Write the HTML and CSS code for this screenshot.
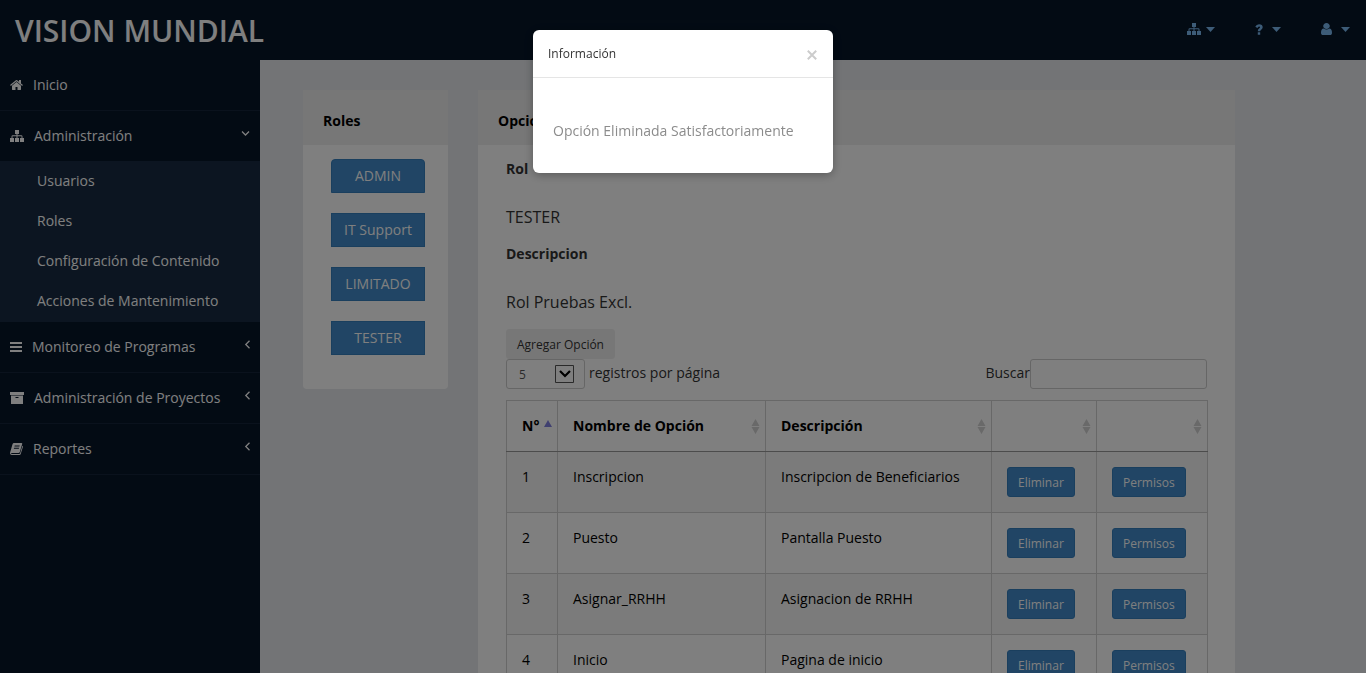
FILE: index.html
```html
<!DOCTYPE html>
<html lang="es">
<head>
<meta charset="utf-8">
<meta name="viewport" content="width=device-width, initial-scale=1">
<title>Vision Mundial</title>
<link rel="stylesheet" href="styles.css">
</head>
<body>
<svg class="sprite" aria-hidden="true">
  <symbol id="sitemap" viewBox="0 0 14 12"><path d="M5 0h4v4H7.5v1.3h3.7q1.3 0 1.3 1.2V8H14v4h-4V8h1.5V6.3h-4V8H9v4H5V8h1.500V6.300h-4V8H4v4H0V8h1.500V6.500q0-1.200 1.300-1.200h3.700V4H5z"/></symbol>
  <symbol id="caret" viewBox="0 0 9 5"><path d="M0 0h9L4.500 5z"/></symbol>
  <symbol id="down" viewBox="0 0 9 9"><path d="M1 2.500l3.500 3.500L8 2.500" fill="none" stroke="currentColor" stroke-width="1.300"/></symbol>
  <symbol id="left" viewBox="0 0 9 9"><path d="M8.500 .800L4.800 4.500 8.500 8.200" fill="none" stroke="currentColor" stroke-width="1.300"/></symbol>
  <symbol id="sort" viewBox="0 0 9 15"><path d="M.500 7L4.500 0l4 7zM.500 8h8l-4 7z"/></symbol>
</svg>

<header class="topbar">
  <h1 class="brand">VISION MUNDIAL</h1>
  <nav class="tools" aria-label="Herramientas">
    <a class="tool tool-tight" href="#" aria-label="Sitio"><svg class="icon14"><use href="#sitemap"/></svg><svg class="caret"><use href="#caret"/></svg></a>
    <a class="tool" href="#" aria-label="Ayuda"><svg class="icon-help" viewBox="0 0 8 11"><path d="M.3 2.800Q1.300.300 4 .300q3.700 0 3.700 3 0 1.500-1.500 2.400-1 .6-1 1.600H2.800q0-2 1.300-2.800 1-.6 1-1.200 0-.9-1.100-.9-.8 0-1.600 1.500zM2.800 8.300h2.400v2.400H2.800z"/></svg><svg class="caret"><use href="#caret"/></svg></a>
    <a class="tool" href="#" aria-label="Usuario"><svg class="icon-user" viewBox="0 128 1280 1536" preserveAspectRatio="none"><path d="M1280 1399q0 109-62.500 187t-150.500 78h-854q-88 0-150.500-78T0 1399q0-85 8.500-160.500t31.500-152 58.500-131 94-89T327 832q131 128 313 128t313-128q76 0 134.500 34.500t94 89 58.500 131 31.500 152T1280 1399zM1024 512q0 159-112.500 271.500T640 896 368.500 783.500 256 512t112.500-271.500T640 128t271.500 112.500T1024 512z"/></svg><svg class="caret"><use href="#caret"/></svg></a>
  </nav>
</header>

<div class="layout">
  <nav class="sidebar" aria-label="Principal">
    <a class="item" href="#"><svg class="icon13" viewBox="0 253 1664 1283"><path d="M1408 992v480q0 26-19 45t-45 19H960v-384H704v384H320q-26 0-45-19t-19-45V992q0-1 .5-3t.5-3l575-474 575 474q1 2 1 6zm223-69l-62 74q-8 9-21 11h-3q-13 0-21-7L832 424 140 1001q-12 8-24 7-13-2-21-11l-62-74q-8-10-7-23.500T37 878l719-599q32-26 76-26t76 26l244 204V288q0-14 9-23t23-9h192q14 0 23 9t9 23v408l219 182q10 8 11 21.500t-7 23.500z"/></svg>Inicio</a>
    <a class="item" href="#"><svg class="icon14"><use href="#sitemap"/></svg>Administración<svg class="chevron"><use href="#down"/></svg></a>
    <div class="submenu">
      <a class="subitem" href="#">Usuarios</a>
      <a class="subitem" href="#">Roles</a>
      <a class="subitem" href="#">Configuración de Contenido</a>
      <a class="subitem" href="#">Acciones de Mantenimiento</a>
    </div>
    <a class="item" href="#"><svg class="icon12" viewBox="0 0 12 12"><path d="M0 1h12v2H0zM0 5h12v2H0zM0 9h12v2H0z"/></svg>Monitoreo de Programas<svg class="chevron"><use href="#left"/></svg></a>
    <a class="item" href="#"><svg class="icon14" viewBox="0 0 14 12"><path d="M0 0h14v3H0zM1 3.600h12V12H1zM5.500 5v1h3V5z" fill-rule="evenodd"/></svg>Administración de Proyectos<svg class="chevron"><use href="#left"/></svg></a>
    <a class="item" href="#"><svg class="icon13" viewBox="0 0 13 12"><path d="M4 0h7.500q1 0 .7 1L9.800 9q-.3 1-1.300 1H1.800q-.7 0-.7.500t.7.500h7.400q.6 0 .9-.8l2.300-7.500q.8.300.5 1.300L10.700 11q-.3 1-1.300 1H1.700Q-.3 12 .1 9.600L2.500 1.300Q2.900 0 4 0zM4.700 2.500l-.3 1h5l.3-1zM4.100 4.700l-.3 1h5l.3-1z" fill-rule="evenodd"/></svg>Reportes<svg class="chevron"><use href="#left"/></svg></a>
  </nav>

  <main class="content">
    <section class="panel">
      <h2 class="panel-title">Roles</h2>
      <div class="roles">
        <button class="btn role role-first" type="button">ADMIN</button>
        <button class="btn role" type="button">IT Support</button>
        <button class="btn role" type="button">LIMITADO</button>
        <button class="btn role" type="button">TESTER</button>
      </div>
    </section>

    <section class="panel">
      <h2 class="panel-title">Opciones</h2>
      <div class="details">
        <dl class="facts">
          <dt>Rol</dt><dd>TESTER</dd>
          <dt>Descripcion</dt><dd>Rol Pruebas Excl.</dd>
        </dl>
        <button class="btn btn-small btn-plain" type="button">Agregar Opción</button>
        <div class="filters">
          <div class="length">
            <span class="select-box">
              <select id="length" class="field select"><option>5</option><option>10</option><option>25</option></select>
              <svg class="select-arrow" viewBox="0 0 19 18" aria-hidden="true"><path d="M.5.500h18v17H.500z" fill="#fff" fill-opacity=".15" stroke="#555"/><path d="M5 6l5 5 5-5" fill="none" stroke="#000" stroke-width="2.200"/></svg>
            </span>
            <label for="length">registros por página</label>
          </div>
          <div class="search"><label for="search">Buscar</label><input id="search" class="field search-field" type="text"></div>
        </div>
        <table class="grid">
          <colgroup><col class="c-num"><col class="c-name"><col class="c-desc"><col class="c-del"><col class="c-perm"></colgroup>
          <thead><tr>
            <th scope="col"><span class="head">N°<svg class="sorted" viewBox="0 0 8 7"><path d="M0 7l4-7 4 7z"/></svg></span></th>
            <th scope="col"><span class="head">Nombre de Opción<svg class="sort"><use href="#sort"/></svg></span></th>
            <th scope="col"><span class="head">Descripción<svg class="sort"><use href="#sort"/></svg></span></th>
            <th scope="col"><span class="head"><svg class="sort"><use href="#sort"/></svg></span></th>
            <th scope="col"><span class="head"><svg class="sort"><use href="#sort"/></svg></span></th>
          </tr></thead>
          <tbody>
            <tr><td>1</td><td>Inscripcion</td><td>Inscripcion de Beneficiarios</td><td><button class="btn btn-small" type="button">Eliminar</button></td><td><button class="btn btn-small" type="button">Permisos</button></td></tr>
            <tr><td>2</td><td>Puesto</td><td>Pantalla Puesto</td><td><button class="btn btn-small" type="button">Eliminar</button></td><td><button class="btn btn-small" type="button">Permisos</button></td></tr>
            <tr><td>3</td><td>Asignar_RRHH</td><td>Asignacion de RRHH</td><td><button class="btn btn-small" type="button">Eliminar</button></td><td><button class="btn btn-small" type="button">Permisos</button></td></tr>
            <tr><td>4</td><td>Inicio</td><td>Pagina de inicio</td><td><button class="btn btn-small" type="button">Eliminar</button></td><td><button class="btn btn-small" type="button">Permisos</button></td></tr>
          </tbody>
        </table>
      </div>
    </section>
  </main>
</div>

<div class="backdrop">
  <div class="modal" role="dialog" aria-modal="true" aria-labelledby="modal-title">
    <div class="modal-head">
      <h2 class="modal-title" id="modal-title">Información</h2>
      <button class="close" type="button" aria-label="Cerrar"><svg class="close-icon" viewBox="0 0 10 10"><path d="M.800.800l8.400 8.400M9.200.800L.800 9.200" fill="none" stroke="currentColor" stroke-width="2"/></svg></button>
    </div>
    <p class="modal-body">Opción Eliminada Satisfactoriamente</p>
  </div>
</div>
</body>
</html>
```
FILE: styles.css
```css
* { box-sizing: border-box; }

body {
  margin: 0;
  height: 100vh;
  overflow: hidden;
  display: flex;
  flex-direction: column;
  background: #e6e9ed;
  color: #333;
  font: 14px/20px "Open Sans", "Noto Sans", sans-serif;
}

h1, h2, p, dl, dd { margin: 0; }
a { color: inherit; text-decoration: none; }
svg { display: block; flex: none; fill: currentColor; }
button, input, select { font: inherit; margin: 0; }
.sprite { position: absolute; width: 0; height: 0; }

.icon12 { width: 12px; height: 12px; }
.icon13 { width: 13px; height: 12px; }
.icon14 { width: 14px; height: 12px; }
.icon-help { width: 8px; height: 11px; }
.icon-user { width: 11px; height: 12px; }
.caret { width: 9px; height: 5px; }

/* Top bar */
.topbar {
  flex: none;
  height: 60px;
  padding: 0 16px 0 15px;
  display: flex;
  align-items: center;
  justify-content: space-between;
  background: #061629;
}
.brand { padding-top: 2px; font-size: 30px; line-height: 40px; font-weight: 600; color: #fff; }
.tools { display: flex; gap: 40px; padding-bottom: 2px; color: #7ab8f0; }
.tool { display: flex; align-items: center; gap: 9px; }
.tool-tight { gap: 5px; }

/* Sidebar */
.layout { flex: 1; min-height: 0; display: flex; align-items: stretch; }
.sidebar { flex: none; width: 260px; background: #061629; color: #fff; }
.item {
  display: flex;
  align-items: center;
  gap: 10px;
  height: 51px;
  padding: 0 10px;
  border-bottom: 1px solid #14253a;
}
.chevron { width: 9px; height: 9px; margin: 0 0 5px auto; }
.submenu { margin-top: -1px; padding-bottom: 1px; background: #182b42; }
.subitem { display: block; padding: 10px 10px 10px 37px; }

/* Content */
.content {
  flex: 1;
  min-height: 0;
  overflow: hidden;
  display: grid;
  grid-template-columns: 145px minmax(0, 1fr);
  align-items: start;
  gap: 30px;
  padding: 30px 131px 0 43px;
}
.panel { background: #fff; border-radius: 4px; }
.panel-title {
  padding: 21px 20px 14px;
  background: #efefef;
  color: #000;
  font-size: 14px;
  line-height: 20px;
  font-weight: 700;
}
.roles {
  display: flex;
  flex-direction: column;
  gap: 20px;
  padding: 14px 23px 34px 28px;
}

.btn {
  height: 34px;
  padding: 0 10px;
  border: 1px solid #357ebd;
  background: #428bca;
  color: #fff;
  line-height: 20px;
  white-space: nowrap;
}
.role { border-radius: 0; }
.role-first { border-radius: 4px 4px 0 0; }
.btn-small { display: block; height: 30px; padding-top: 2px; font-size: 12px; border-radius: 3px; }
.btn-plain { background: #efefef; border-color: #efefef; color: #333; }

.details { padding: 14px 27px 20px 28px; }
.facts dt { font-weight: 700; line-height: 20px; padding-bottom: 28px; }
.facts dd { font-size: 16px; line-height: 20px; padding-bottom: 17px; }

.filters { display: flex; justify-content: space-between; margin-bottom: 11px; padding-right: 1px; }
.length { display: flex; gap: 4px; }
.length label, .search label { padding-top: 4px; }
.search { display: flex; }
.field {
  height: 30px;
  border: 1px solid #ccc;
  border-radius: 3px;
  background: #fff;
  color: #555;
  font-size: 12px;
  padding: 5px 10px;
}
.select-box { position: relative; display: block; }
.select { appearance: none; width: 79px; padding: 5px 12px 3px; }
.select-arrow { position: absolute; right: 11px; top: 6px; width: 19px; height: 18px; pointer-events: none; }
.search-field { width: 177px; }

.grid {
  width: 100%;
  table-layout: fixed;
  border-collapse: collapse;
  color: #000;
}
.grid th, .grid td { border: 1px solid #d0d0d0; text-align: left; vertical-align: top; }
.grid th { height: 51px; padding: 15px 5px 15px 15px; border-bottom-color: #999; font-weight: 700; }
.grid td { height: 61px; padding: 15px; }
.grid tbody tr:nth-child(odd) { background: #f7f7f7; }
.c-num { width: 51px; }
.c-name { width: 208px; }
.c-del { width: 105px; }
.c-perm { width: 111px; }
.head { display: flex; align-items: center; height: 20px; }
.sort { width: 9px; height: 15px; margin-left: auto; color: #d2d2d2; }
.sorted { width: 8px; height: 7px; margin: 0 0 6px auto; color: #8080e0; }

/* Dialog */
.backdrop {
  position: fixed;
  inset: 0;
  display: flex;
  justify-content: center;
  align-items: flex-start;
  padding-top: 30px;
  background: rgba(0, 0, 0, .5);
}
.modal {
  width: 300px;
  background: #fff;
  border-radius: 6px;
  box-shadow: 0 2px 10px rgba(0, 0, 0, .3);
}
.modal-head {
  display: flex;
  align-items: center;
  justify-content: space-between;
  padding: 14px 16px 13px 15px;
  border-bottom: 1px solid #e5e5e5;
}
.modal-title { font-size: 12px; line-height: 20px; font-weight: 400; color: #333; }
.close { padding: 1px 0 0; border: 0; background: none; color: #ccc; }
.close-icon { width: 10px; height: 10px; }
.modal-body { padding: 43px 20px 32px; color: #8c8c8c; }
```
